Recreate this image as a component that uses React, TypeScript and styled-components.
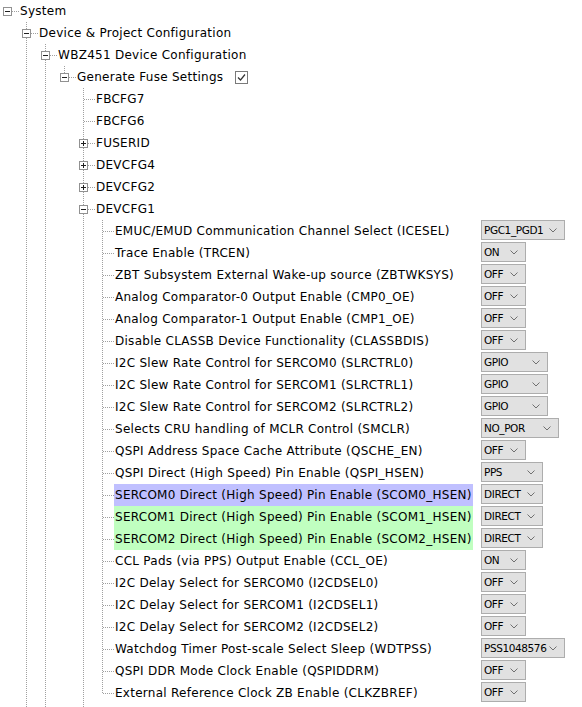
import React from 'react';
import styled, { createGlobalStyle } from 'styled-components';

type TreeNode = {
  label: string;
  open?: boolean; // undefined = leaf, false = collapsed, true = expanded
  more?: boolean; // has further siblings below the visible area
  checkbox?: boolean;
  highlight?: 'blue' | 'green';
  value?: string;
  selectWidth?: number;
  children?: TreeNode[];
};

const opt = (label: string, value: string, selectWidth: number, highlight?: 'blue' | 'green'): TreeNode => ({
  label,
  value,
  selectWidth,
  highlight,
});

const devcfg1: TreeNode[] = [
  opt('EMUC/EMUD Communication Channel Select (ICESEL)', 'PGC1_PGD1', 84),
  opt('Trace Enable (TRCEN)', 'ON', 45),
  opt('ZBT Subsystem External Wake-up source (ZBTWKSYS)', 'OFF', 45),
  opt('Analog Comparator-0 Output Enable (CMP0_OE)', 'OFF', 45),
  opt('Analog Comparator-1 Output Enable (CMP1_OE)', 'OFF', 45),
  opt('Disable CLASSB Device Functionality (CLASSBDIS)', 'OFF', 45),
  opt('I2C Slew Rate Control for SERCOM0 (SLRCTRL0)', 'GPIO', 67),
  opt('I2C Slew Rate Control for SERCOM1 (SLRCTRL1)', 'GPIO', 67),
  opt('I2C Slew Rate Control for SERCOM2 (SLRCTRL2)', 'GPIO', 67),
  opt('Selects CRU handling of MCLR Control (SMCLR)', 'NO_POR', 78),
  opt('QSPI Address Space Cache Attribute (QSCHE_EN)', 'OFF', 45),
  opt('QSPI Direct (High Speed) Pin Enable (QSPI_HSEN)', 'PPS', 62),
  opt('SERCOM0 Direct (High Speed) Pin Enable (SCOM0_HSEN)', 'DIRECT', 62, 'blue'),
  opt('SERCOM1 Direct (High Speed) Pin Enable (SCOM1_HSEN)', 'DIRECT', 62, 'green'),
  opt('SERCOM2 Direct (High Speed) Pin Enable (SCOM2_HSEN)', 'DIRECT', 62, 'green'),
  opt('CCL Pads (via PPS) Output Enable (CCL_OE)', 'ON', 45),
  opt('I2C Delay Select for SERCOM0 (I2CDSEL0)', 'OFF', 45),
  opt('I2C Delay Select for SERCOM1 (I2CDSEL1)', 'OFF', 45),
  opt('I2C Delay Select for SERCOM2 (I2CDSEL2)', 'OFF', 45),
  opt('Watchdog Timer Post-scale Select Sleep (WDTPSS)', 'PSS1048576', 84),
  opt('QSPI DDR Mode Clock Enable (QSPIDDRM)', 'OFF', 45),
  opt('External Reference Clock ZB Enable (CLKZBREF)', 'OFF', 45),
];

const tree: TreeNode = {
  label: 'System',
  open: true,
  children: [
    {
      label: 'Device & Project Configuration',
      open: true,
      more: true,
      children: [
        {
          label: 'WBZ451 Device Configuration',
          open: true,
          more: true,
          children: [
            {
              label: 'Generate Fuse Settings',
              open: true,
              checkbox: true,
              children: [
                { label: 'FBCFG7' },
                { label: 'FBCFG6' },
                { label: 'FUSERID', open: false },
                { label: 'DEVCFG4', open: false },
                { label: 'DEVCFG2', open: false },
                { label: 'DEVCFG1', open: true, more: true, children: devcfg1 },
              ],
            },
          ],
        },
      ],
    },
  ],
};

type FlatRow = {
  node: TreeNode;
  depth: number;
  guides: boolean[];
  hasNext: boolean;
};

// walk the tree into visible rows, remembering which ancestor columns keep a line
const flatten = (node: TreeNode, depth: number, guides: boolean[], hasNext: boolean, out: FlatRow[]) => {
  out.push({ node, depth, guides, hasNext });
  if (node.open && node.children) {
    const childGuides = depth === 0 ? [false] : [...guides, hasNext];
    node.children.forEach((child, i) => {
      const last = i === node.children!.length - 1;
      flatten(child, depth + 1, childGuides, !last || !!child.more, out);
    });
  }
  return out;
};

const GlobalStyle = createGlobalStyle`
  html, body {
    margin: 0;
    padding: 0;
    background: #ffffff;
    overflow: hidden;
  }
`;

const dotV = `linear-gradient(to bottom, #a0a0a0 50%, transparent 50%)`;
const dotH = `linear-gradient(to right, #a0a0a0 50%, transparent 50%)`;

const TreeView = styled.div`
  display: flex;
  flex-direction: column;
  font-family: 'DejaVu Sans', Verdana, sans-serif;
  font-size: 12px;
  letter-spacing: 0.27px;
  color: #000;
`;

const Row = styled.div`
  display: flex;
  align-items: flex-start;
  height: 22px;
  flex: 0 0 22px;
`;

const TreePart = styled.div`
  flex: 0 0 481px;
  display: flex;
  align-items: center;
  height: 22px;
  min-width: 0;
`;

const Guide = styled.span<{ $line: boolean }>`
  flex: 0 0 19px;
  height: 22px;
  background-image: ${(p) => (p.$line ? dotV : 'none')};
  background-size: 1px 2px;
  background-repeat: repeat-y;
  background-position: 7px 0;
`;

const Joint = styled.span<{ $top: boolean; $bottom: boolean }>`
  position: relative;
  flex: 0 0 19px;
  height: 22px;

  &::before {
    content: '';
    display: ${(p) => (p.$top ? 'block' : 'none')};
    position: absolute;
    left: 7px;
    top: 0;
    width: 1px;
    height: ${(p) => (p.$bottom ? 22 : 11)}px;
    background-image: ${dotV};
    background-size: 1px 2px;
  }

  &::after {
    content: '';
    position: absolute;
    left: 8px;
    top: 11px;
    width: 11px;
    height: 1px;
    background-image: ${dotH};
    background-size: 2px 1px;
  }
`;

const Toggle = styled.span<{ $open: boolean }>`
  position: absolute;
  z-index: 1;
  left: 3px;
  top: 7px;
  width: 9px;
  height: 9px;
  box-sizing: border-box;
  border: 1px solid #919191;
  background: #fff;

  &::before {
    content: '';
    position: absolute;
    left: 1px;
    top: 3px;
    width: 5px;
    height: 1px;
    background: #202020;
  }

  &::after {
    content: '';
    display: ${(p) => (p.$open ? 'none' : 'block')};
    position: absolute;
    left: 3px;
    top: 1px;
    width: 1px;
    height: 5px;
    background: #202020;
  }
`;

const highlights = {
  blue: '#c0c0ff',
  green: '#c0ffc0',
};

const Label = styled.span<{ $hl?: 'blue' | 'green' }>`
  padding: 0 1px;
  line-height: 22px;
  height: 22px;
  white-space: nowrap;
  background: ${(p) => (p.$hl ? highlights[p.$hl] : 'transparent')};
`;

const Check = styled.span`
  display: inline-flex;
  align-items: center;
  justify-content: center;
  margin-left: 11px;
  width: 13px;
  height: 13px;
  box-sizing: border-box;
  border: 1px solid #7a7a7a;
  background: #fff;
`;

const Select = styled.div<{ $w: number }>`
  display: flex;
  align-items: center;
  width: ${(p) => p.$w}px;
  height: 20px;
  box-sizing: border-box;
  border: 1px solid #adadad;
  background: #e1e1e1;
  padding: 0 7px 0 2px;
  font-family: 'DejaVu Sans', sans-serif;
  font-size: 10.5px;
  letter-spacing: -0.4px;
  color: #000;
  white-space: nowrap;
  overflow: hidden;
`;

const SelectValue = styled.span`
  flex: 1 1 auto;
`;

const Chevron = () => (
  <svg width="8" height="5" viewBox="0 0 8 5">
    <path d="M0.5 0.5 L4 4 L7.5 0.5" fill="none" stroke="#707070" strokeWidth="1" />
  </svg>
);

const CheckMark = () => (
  <svg width="11" height="11" viewBox="0 0 11 11">
    <path d="M2 5.5 L4.5 8 L9 2.5" fill="none" stroke="#333" strokeWidth="1.2" />
  </svg>
);

const TreeRow = ({ row }: { row: FlatRow }) => {
  const { node, depth, guides, hasNext } = row;
  return (
    <Row>
      <TreePart>
        {guides.map((g, i) => (
          <Guide key={i} $line={g} />
        ))}
        <Joint $top={depth > 0} $bottom={depth > 0 && hasNext}>
          {node.open !== undefined && <Toggle $open={node.open} />}
        </Joint>
        <Label $hl={node.highlight}>{node.label}</Label>
        {node.checkbox && (
          <Check>
            <CheckMark />
          </Check>
        )}
      </TreePart>
      {node.value && (
        <Select $w={node.selectWidth ?? 45}>
          <SelectValue>{node.value}</SelectValue>
          <Chevron />
        </Select>
      )}
    </Row>
  );
};

// the guide lines of ancestors that carry on past the bottom edge
const FillerRow = ({ guides }: { guides: boolean[] }) => (
  <Row>
    {guides.map((g, i) => (
      <Guide key={i} $line={g} />
    ))}
  </Row>
);

export default function App() {
  const rows = flatten(tree, 0, [], false, []);
  const last = rows[rows.length - 1];
  return (
    <>
      <GlobalStyle />
      <TreeView>
        {rows.map((row, i) => (
          <TreeRow key={i} row={row} />
        ))}
        <FillerRow guides={last.guides} />
      </TreeView>
    </>
  );
}
